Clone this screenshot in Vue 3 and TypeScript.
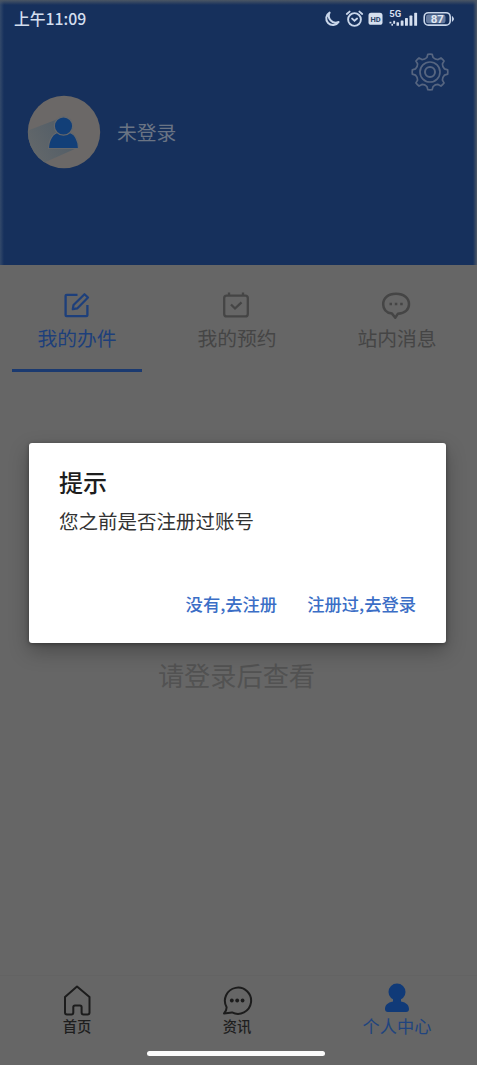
<script setup lang="ts">
interface Tab {
  id: string
  label: string
}

const tabs: Tab[] = [
  { id: 'work', label: '我的办件' },
  { id: 'booking', label: '我的预约' },
  { id: 'message', label: '站内消息' },
]
const activeTab = 'work'

const navItems: Tab[] = [
  { id: 'home', label: '首页' },
  { id: 'news', label: '资讯' },
  { id: 'mine', label: '个人中心' },
]
const activeNav = 'mine'

const gearPath = (() => {
  const parts: string[] = []
  const at = (r: number, deg: number) => {
    const a = (deg * Math.PI) / 180
    return `${(20 + r * Math.sin(a)).toFixed(2)} ${(20 - r * Math.cos(a)).toFixed(2)}`
  }
  for (let i = 0; i < 8; i++) {
    const c = i * 45
    parts.push(`${i === 0 ? 'M' : 'L'}${at(14.8, c - 12)}`)
    parts.push(`L${at(17.8, c - 7)}`)
    parts.push(`A18 18 0 0 1 ${at(17.8, c + 7)}`)
    parts.push(`L${at(14.8, c + 12)}`)
    parts.push(`Q${at(13.4, c + 22.5)} ${at(14.8, c + 33)}`)
  }
  return parts.join(' ') + 'Z'
})()
</script>

<template>
  <div class="screen">
    <header class="hero">
      <div class="status">
        <span class="time">上午11:09</span>
        <svg class="status-icons" width="134" height="20" viewBox="0 0 134 20">
          <path d="M7.600 3.600A6.700 6.700 0 1 0 16.600 13A6.900 6.900 0 0 1 7.600 3.600Z" fill="none" stroke="#c9d6ea" stroke-width="2" stroke-linejoin="round" />
          <g fill="none" stroke="#c9d6ea" stroke-width="1.900" stroke-linecap="round">
            <circle cx="32.500" cy="10.500" r="6.400" />
            <path d="M24.800 5L27.600 2.600M40.200 5L37.400 2.600M30.100 9.600L32.500 11.800L35.100 9.600" />
          </g>
          <rect x="46.500" y="3.800" width="14" height="12" rx="2.600" fill="#d5dfef" />
          <text x="53.500" y="12.600" class="hd">HD</text>
          <text x="67.200" y="8" class="net">5G</text>
          <g fill="#d5dfef">
            <rect x="67.500" y="12.800" width="1.900" height="1.600" />
            <rect x="69.400" y="14.800" width="1.600" height="1.900" />
            <rect x="71.200" y="11.800" width="1.900" height="3" />
            <rect x="74.500" y="13.200" width="2.500" height="3.600" rx=".6" />
            <rect x="78.700" y="11.500" width="2.800" height="5.300" rx=".6" />
            <rect x="83" y="9" width="2.900" height="7.800" rx=".6" />
            <rect x="87.500" y="6.600" width="2.900" height="10.200" rx=".6" />
            <rect x="92.200" y="3.800" width="2.900" height="13" rx=".6" />
          </g>
          <rect x="102.200" y="3.700" width="26" height="12.400" rx="4.200" fill="none" stroke="#c9d6ea" stroke-width="1.600" />
          <rect x="104" y="5.500" width="19.500" height="8.800" rx="2.400" fill="#667b9f" />
          <path d="M130.400 7.600Q132.600 10 130.400 12.300Z" fill="#c9d6ea" stroke="#c9d6ea" />
          <text x="115.300" y="14" class="level">87</text>
        </svg>
      </div>
      <div class="settings">
        <svg width="40" height="40" viewBox="0 0 40 40" fill="none" stroke="#566580" stroke-width="1.700">
          <path :d="gearPath" stroke-linejoin="round" />
          <circle cx="20" cy="20" r="10" />
          <circle cx="20" cy="20" r="5" stroke-width="2" />
        </svg>
      </div>
      <div class="profile">
        <svg width="74" height="74" viewBox="0 0 74 74">
          <defs>
            <clipPath id="face"><circle cx="37" cy="37" r="36" /></clipPath>
            <linearGradient id="cast" x1="1" y1="0" x2="0" y2=".5">
              <stop offset="0" stop-color="#4d5a66" />
              <stop offset="1" stop-color="#62676a" />
            </linearGradient>
          </defs>
          <circle cx="37" cy="37" r="36.200" fill="#6b6867" />
          <path clip-path="url(#face)" d="M31 24L0 36V55L14 69L50 53L36 36Z" fill="url(#cast)" />
          <g fill="#123f78" stroke="#65686c" stroke-width="1.200">
            <path d="M21.500 53.500C21.500 45 26 37.500 32 37.500H41C47.500 37.500 51.500 45 51.500 53.500Z" />
            <circle cx="36.500" cy="31" r="9.200" />
          </g>
        </svg>
        <span class="name">未登录</span>
      </div>
    </header>

    <nav class="tabs">
      <div v-for="tab in tabs" :key="tab.id" class="tab" :class="{ active: tab.id === activeTab }">
        <svg width="32" height="30" viewBox="0 0 32 30" fill="none" stroke="currentColor" stroke-width="2.300">
          <g v-if="tab.id === 'work'">
            <path d="M16.500 4.800H5.600Q4.600 4.800 4.600 5.800V25.200Q4.600 26.200 5.600 26.200H25.400Q26.400 26.200 26.400 25.200V15" />
            <path d="M11.800 19.200L12.500 15L23.500 4.200L27 7.500L16.200 18.400Z" stroke-width="2.200" stroke-linejoin="round" />
          </g>
          <g v-else-if="tab.id === 'booking'">
            <rect x="4.200" y="5.600" width="23.600" height="20.800" rx="2.500" />
            <path d="M9 2.500V6M23 2.500V6M11 14.500L15 18.500L21.500 12.300" />
          </g>
          <g v-else>
            <path d="M16 3.800C8 3.800 3.200 8 3.200 14.200C3.200 19 6.200 22.700 12 23.600L15.300 27.700L17.800 23.800C25 23.600 29 19.500 29 14.200C29 8 24 3.800 16 3.800Z" stroke-linejoin="round" stroke-width="2.500" />
            <path d="M9.500 14H12M14.800 14H17.300M20.200 14H22.700" />
          </g>
        </svg>
        <span class="tab-label">{{ tab.label }}</span>
        <i class="tab-line"></i>
      </div>
    </nav>

    <main class="content">请登录后查看</main>

    <footer class="bottom">
      <div class="nav">
        <div v-for="item in navItems" :key="item.id" class="nav-item" :class="{ active: item.id === activeNav }">
          <svg width="34" height="34" viewBox="0 0 34 34" fill="none" stroke="#1c1c1c" stroke-width="2" stroke-linejoin="round">
            <path v-if="item.id === 'home'" d="M17 4.500L29.500 15V30.500Q29.500 32.500 27.500 32.500H23.500Q21.600 32.500 21.600 30.500V25Q21.600 23.500 20 23.500H15Q13.300 23.500 13.300 25V30.500Q13.300 32.500 11.400 32.500H7Q5 32.500 5 30.500V15Z" />
            <g v-else-if="item.id === 'news'">
              <path d="M6.600 25.200A13.100 13.100 0 1 1 12 30.400L4 31.400Q6.700 28.500 6.600 25.200Z" />
              <g fill="#1c1c1c" stroke="none">
                <circle cx="11.800" cy="18.500" r="1.900" />
                <circle cx="17.200" cy="18.500" r="1.900" />
                <circle cx="22.600" cy="18.500" r="1.900" />
              </g>
            </g>
            <g v-else fill="#103a78" stroke="none">
              <circle cx="17" cy="10" r="8.500" />
              <path d="M13 15H21V19.500C26.500 20.500 29 23.500 29 27Q29 30 26 30H8Q5 30 5 27C5 23.500 7.500 20.500 13 19.500Z" />
            </g>
          </svg>
          <span>{{ item.label }}</span>
        </div>
      </div>
      <i class="handle"></i>
    </footer>

    <section class="dialog" role="dialog">
      <h2>提示</h2>
      <p>您之前是否注册过账号</p>
      <div class="actions">
        <span>没有,去注册</span>
        <span>注册过,去登录</span>
      </div>
    </section>
  </div>
</template>

<style>
body {
  margin: 0;
  background: #fff;
}
</style>

<style scoped>
.screen {
  position: relative;
  display: flex;
  flex-direction: column;
  width: 477px;
  height: 1065px;
  overflow: hidden;
  background: #666;
  font-family: "Noto Sans CJK SC", sans-serif;
}

svg {
  display: block;
  flex: none;
}

.hero {
  box-sizing: border-box;
  height: 265px;
  background:
    linear-gradient(#4b5664, transparent 5px),
    linear-gradient(90deg, #33496a, transparent 4px),
    linear-gradient(270deg, #4b5664, transparent 4px),
    #16305c;
}

.status {
  display: flex;
  justify-content: space-between;
  align-items: center;
  height: 38px;
  padding: 0 21px 0 14px;
}

.time {
  color: #d3deee;
  font-size: 15.800px;
  font-weight: 500;
  line-height: 38px;
}

.hd,
.net,
.level {
  font-family: Roboto, sans-serif;
  font-weight: 700;
}

.hd {
  fill: #294268;
  font-size: 7.500px;
  text-anchor: middle;
}

.net {
  fill: #d5dfef;
  font-size: 9.500px;
}

.level {
  fill: #e2e9f3;
  font-size: 11.500px;
  text-anchor: middle;
}

.settings {
  display: flex;
  justify-content: flex-end;
  height: 40px;
  padding: 14px 27px 0 0;
}

.profile {
  display: flex;
  align-items: center;
  gap: 16px;
  padding: 3px 0 0 27px;
}

.name {
  color: #6a7484;
  font-size: 19.800px;
  line-height: 30px;
}

.tabs {
  display: flex;
  height: 110px;
}

.tab {
  display: flex;
  flex: none;
  flex-direction: column;
  align-items: center;
  width: 160px;
  padding-top: 25px;
  color: #454545;
}

.tab:first-child {
  width: 154px;
  margin-right: 3px;
}

.tab:not(:first-child) svg {
  margin-right: 2px;
}

.tab.active {
  color: #1d3f7b;
}

.tab-label {
  font-size: 19.800px;
  line-height: 30px;
  margin-top: 3px;
}

.tab-line {
  width: 130px;
  height: 3px;
  margin-top: 16px;
}

.active .tab-line {
  background: #1b3a70;
}

.content {
  flex: 1;
  padding: 281px 4px 0 0;
  color: #525252;
  font-size: 26.200px;
  line-height: 38px;
  text-align: center;
}

.bottom {
  display: flex;
  flex-direction: column;
  align-items: center;
  box-sizing: border-box;
  height: 90px;
  padding-right: 5px;
  border-top: 1px solid #636363;
}

.nav {
  display: flex;
  width: 480px;
  height: 75px;
  margin-right: -2px;
}

.nav-item {
  display: flex;
  flex: 1;
  flex-direction: column;
  align-items: center;
  padding-top: 6px;
  color: #1e1e1e;
  font-size: 14.300px;
  font-weight: 500;
  line-height: 20px;
}

.nav-item.active {
  color: #20447f;
  font-size: 17.200px;
  font-weight: 400;
}

.handle {
  width: 178px;
  height: 5px;
  border-radius: 3px;
  background: #fafafa;
}

.dialog {
  position: absolute;
  top: 443px;
  left: 29px;
  box-sizing: border-box;
  width: 417px;
  height: 200px;
  padding: 21px 30px 24px;
  border-radius: 3px;
  background: #fff;
  box-shadow: 0 8px 20px rgba(0, 0, 0, 0.28), 0 1px 4px rgba(0, 0, 0, 0.35);
}

h2 {
  margin: 0;
  color: #1d1d1d;
  font-size: 24px;
  font-weight: 500;
  line-height: 36px;
}

p {
  margin: 7px 0 0;
  color: #333;
  font-size: 19.500px;
  line-height: 28px;
}

.actions {
  display: flex;
  justify-content: flex-end;
  gap: 30px;
  margin-top: 56px;
  color: #3b6ec6;
  font-size: 17.300px;
  font-weight: 500;
  line-height: 26px;
}
</style>
